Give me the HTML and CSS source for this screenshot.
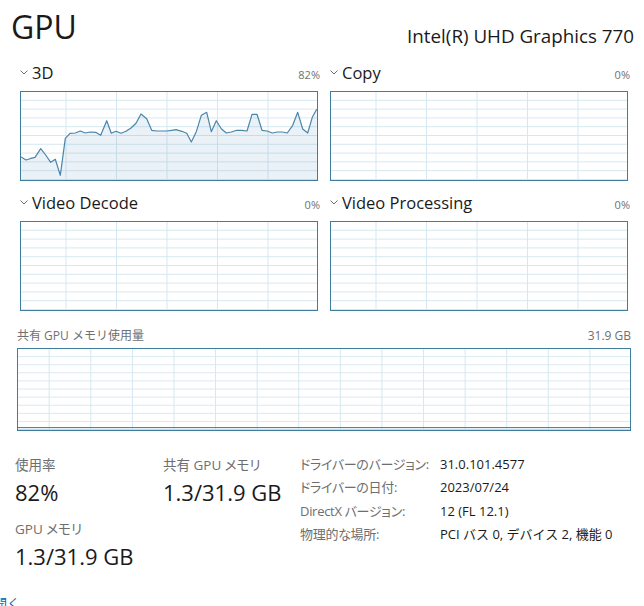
FILE: index.html
```html
<!DOCTYPE html>
<html lang="ja">
<head>
<meta charset="utf-8">
<title>GPU</title>
<link rel="stylesheet" href="styles.css">
</head>
<body>
<div class="page">
  <header class="top">
    <h1 class="title">GPU</h1>
    <div class="adapter">Intel(R) UHD Graphics 770</div>
  </header>

  <section class="engines">
    <div class="engine">
      <div class="engine-head">
        <svg class="chev" viewBox="0 0 8 5"><polyline points="0.5,0.5 4,4 7.5,0.5"/></svg>
        <span class="engine-name">3D</span>
        <span class="engine-pct">82%</span>
      </div>
      <div class="graph">
        <svg class="plot" viewBox="21 92 296 88" preserveAspectRatio="none">
          <polygon class="area" points="20.7,156.7 26,160 30,158.7 35,157.3 40.7,148.7 45.7,155 50.7,162.3 55.3,159.3 60.3,175.3 65.3,138.3 70,133.3 75.3,133 80.3,131 85.3,133 90.3,132 95.7,132.3 100.7,135.3 106.7,120.7 111.3,133.3 116,131.3 121,133.3 126,131.3 131,128 136,123.3 141,114 146.7,118.7 151.7,130.3 156.7,131 162,131 166.7,131 171.7,130.3 176,129.7 181.7,131.3 186.7,133.3 191.3,142 196.3,131.7 201.3,115.3 206.7,112.3 211.3,131.7 216.3,120.7 221.3,128.7 226.3,133 231.3,132 236.7,130.3 241.7,130.3 247,131 252,114.3 257,114.3 262,130.3 267,131 272.3,133 277.3,132 282.3,132 287.3,133 292.7,125.3 297.7,112.3 302.7,129 307.7,133 312.3,117.3 316.7,109.3 317,181 20.7,181"/>
          <polyline class="line" points="20.7,156.7 26,160 30,158.7 35,157.3 40.7,148.7 45.7,155 50.7,162.3 55.3,159.3 60.3,175.3 65.3,138.3 70,133.3 75.3,133 80.3,131 85.3,133 90.3,132 95.7,132.3 100.7,135.3 106.7,120.7 111.3,133.3 116,131.3 121,133.3 126,131.3 131,128 136,123.3 141,114 146.7,118.7 151.7,130.3 156.7,131 162,131 166.7,131 171.7,130.3 176,129.7 181.7,131.3 186.7,133.3 191.3,142 196.3,131.7 201.3,115.3 206.7,112.3 211.3,131.7 216.3,120.7 221.3,128.7 226.3,133 231.3,132 236.7,130.3 241.7,130.3 247,131 252,114.3 257,114.3 262,130.3 267,131 272.3,133 277.3,132 282.3,132 287.3,133 292.7,125.3 297.7,112.3 302.7,129 307.7,133 312.3,117.3 316.7,109.3"/>
        </svg>
      </div>
    </div>

    <div class="engine">
      <div class="engine-head">
        <svg class="chev" viewBox="0 0 8 5"><polyline points="0.5,0.5 4,4 7.5,0.5"/></svg>
        <span class="engine-name">Copy</span>
        <span class="engine-pct">0%</span>
      </div>
      <div class="graph"></div>
    </div>

    <div class="engine">
      <div class="engine-head">
        <svg class="chev" viewBox="0 0 8 5"><polyline points="0.5,0.5 4,4 7.5,0.5"/></svg>
        <span class="engine-name">Video Decode</span>
        <span class="engine-pct">0%</span>
      </div>
      <div class="graph"></div>
    </div>

    <div class="engine">
      <div class="engine-head">
        <svg class="chev" viewBox="0 0 8 5"><polyline points="0.5,0.5 4,4 7.5,0.5"/></svg>
        <span class="engine-name">Video Processing</span>
        <span class="engine-pct">0%</span>
      </div>
      <div class="graph"></div>
    </div>
  </section>

  <section class="shared">
    <div class="shared-head">
      <span>共有 GPU メモリ使用量</span>
      <span>31.9 GB</span>
    </div>
    <div class="graph graph-wide">
      <div class="mem-fill"></div>
    </div>
  </section>

  <section class="stats">
    <div class="stat-grid">
      <div class="stat">
        <div class="stat-label">使用率</div>
        <div class="stat-value">82%</div>
      </div>
      <div class="stat">
        <div class="stat-label">共有 GPU メモリ</div>
        <div class="stat-value">1.3/31.9 GB</div>
      </div>
      <div class="stat">
        <div class="stat-label">GPU メモリ</div>
        <div class="stat-value">1.3/31.9 GB</div>
      </div>
    </div>
    <dl class="info">
      <dt>ドライバーのバージョン:</dt><dd>31.0.101.4577</dd>
      <dt>ドライバーの日付:</dt><dd>2023/07/24</dd>
      <dt>DirectX バージョン:</dt><dd>12 (FL 12.1)</dd>
      <dt>物理的な場所:</dt><dd>PCI バス 0, デバイス 2, 機能 0</dd>
    </dl>
  </section>

  <a class="monitor-link" href="#">開く</a>
</div>
</body>
</html>
```

FILE: styles.css
```css
* {
  box-sizing: border-box;
  margin: 0;
  padding: 0;
}

html, body {
  background: #ffffff;
}

body {
  width: 644px;
  height: 606px;
  overflow: hidden;
  font-family: "Open Sans", "Noto Sans CJK JP", sans-serif;
  color: #1a1a1a;
}

.page {
  width: 644px;
}

/* header */
.top {
  display: flex;
  justify-content: space-between;
  align-items: flex-start;
  height: 62px;
  padding: 7px 10px 0 11px;
}

.title {
  font-size: 32px;
  font-weight: 400;
  line-height: 40px;
}

.adapter {
  font-size: 18.8px;
  line-height: 24px;
  margin-top: 17px;
}

/* engine graphs */
.engines {
  display: grid;
  grid-template-columns: 300px 300px;
  column-gap: 10px;
  row-gap: 11px;
  padding-left: 20px;
}

.engine-head {
  display: flex;
  align-items: baseline;
  height: 22px;
  line-height: 22px;
}

.chev {
  width: 8px;
  height: 5px;
  margin-right: 4px;
  align-self: flex-start;
  margin-top: 8px;
  fill: none;
  stroke: #6e6e6e;
  stroke-width: 1;
}

.engine-name {
  flex: 1;
  font-size: 16.5px;
}

.engine-pct {
  font-size: 11px;
  color: #707070;
}

.graph {
  margin-top: 7px;
  width: 298px;
  height: 90px;
  border: 1px solid #3e7d9c;
  background-color: #ffffff;
  background-image:
    linear-gradient(to right, #d6e7f0 0, #d6e7f0 1px, transparent 1px),
    linear-gradient(to bottom, transparent calc(100% - 1px), #d6e7f0 calc(100% - 1px));
  background-size: 50.5px 100%, 100% 8.8px;
  background-position: 44.5px 0, 0 0;
}

.plot {
  display: block;
  width: 100%;
  height: 100%;
}

.plot .area {
  fill: rgba(60, 130, 180, 0.1);
  stroke: none;
}

.plot .line {
  fill: none;
  stroke: #4a86ab;
  stroke-width: 1.2;
  stroke-linejoin: round;
}

/* shared memory */
.shared {
  padding: 0 13px 0 17px;
  margin-top: 17px;
}

.shared-head {
  display: flex;
  justify-content: space-between;
  font-size: 12px;
  line-height: 16px;
  color: #707070;
}

.graph-wide {
  margin-top: 4px;
  width: 614px;
  height: 83px;
  display: flex;
  flex-direction: column;
  justify-content: flex-end;
  background-size: 41.6px 100%, 100% 8.1px;
  background-position: 30.7px 0, 0 0;
}

.mem-fill {
  height: 3px;
  border-top: 1px solid #4a86ab;
  background: rgba(60, 130, 180, 0.12);
}

/* stats */
.stats {
  display: flex;
  padding-left: 15px;
  margin-top: 25px;
}

.stat-grid {
  display: grid;
  grid-template-columns: 148px 137px;
  row-gap: 13px;
}

.stat-label {
  font-size: 13.5px;
  line-height: 18px;
  color: #6e6e6e;
  font-feature-settings: "palt";
  white-space: nowrap;
}

.stat-value {
  margin-top: 3px;
  font-size: 22px;
  line-height: 30px;
  color: #1a1a1a;
}

.info {
  display: grid;
  grid-template-columns: 140px auto;
  grid-auto-rows: 23.4px;
  margin-top: -3px;
  font-size: 13px;
  line-height: 23.4px;
  white-space: nowrap;
}

.info dt {
  color: #6e6e6e;
  font-size: 13px;
  letter-spacing: -0.3px;
  font-feature-settings: "palt";
}

.info dd {
  color: #1a1a1a;
}

.monitor-link {
  display: block;
  margin-top: 24px;
  margin-left: -6px;
  font-size: 13px;
  line-height: 16px;
  color: #0066c0;
  text-decoration: none;
}
```
